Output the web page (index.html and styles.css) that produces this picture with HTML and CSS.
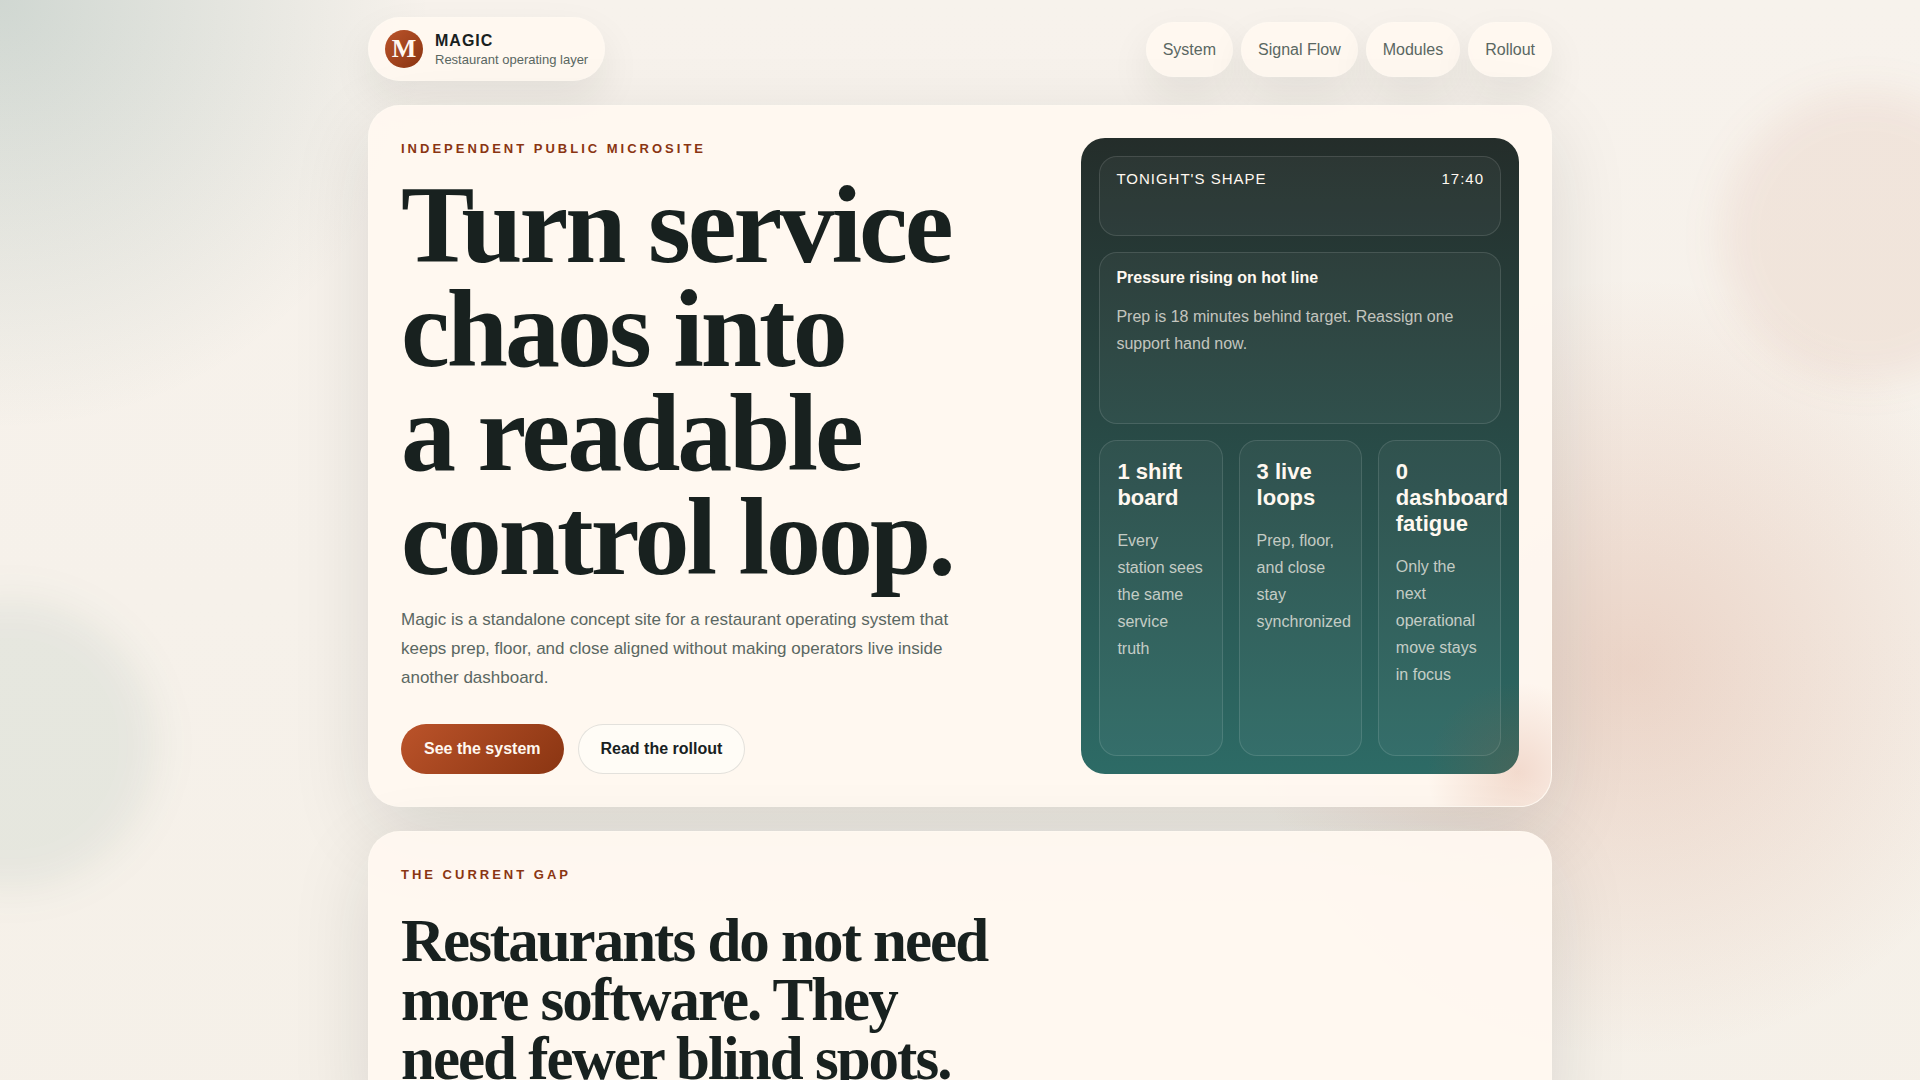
FILE: index.html
```html
<!DOCTYPE html>
<html lang="en">
<head>
    <meta charset="UTF-8">
    <meta name="viewport" content="width=device-width, initial-scale=1.0">
    <title>Magic | Restaurant operating layer</title>
    <link rel="stylesheet" href="styles.css">
</head>
<body>
    <div class="blob blob-warm"></div>
    <div class="blob blob-cool"></div>

    <div class="page">
        <header class="topbar">
            <a class="brand" href="#top">
                <span class="brand-mark">M</span>
                <span class="brand-text">
                    <strong>MAGIC</strong>
                    <small>Restaurant operating layer</small>
                </span>
            </a>
            <nav class="nav">
                <a href="#system">System</a>
                <a href="#flow">Signal Flow</a>
                <a href="#modules">Modules</a>
                <a href="#rollout">Rollout</a>
            </nav>
        </header>

        <main>
            <section class="card hero" id="top">
                <div class="hero-copy">
                    <p class="kicker">Independent public microsite</p>
                    <h1>Turn service<br>chaos into<br>a readable<br>control loop.</h1>
                    <p class="lead">Magic is a standalone concept site for a restaurant operating system that keeps prep, floor, and close aligned without making operators live inside another dashboard.</p>
                    <div class="actions">
                        <a class="button primary" href="#system">See the system</a>
                        <a class="button secondary" href="#rollout">Read the rollout</a>
                    </div>
                </div>

                <div class="panel">
                    <div class="tile tile-head">
                        <span>Tonight's shape</span>
                        <span>17:40</span>
                    </div>
                    <div class="tile">
                        <strong>Pressure rising on hot line</strong>
                        <p>Prep is 18 minutes behind target. Reassign one support hand now.</p>
                    </div>
                    <div class="stats">
                        <div class="tile stat">
                            <strong>1 shift board</strong>
                            <p>Every station sees the same service truth</p>
                        </div>
                        <div class="tile stat">
                            <strong>3 live loops</strong>
                            <p>Prep, floor, and close stay synchronized</p>
                        </div>
                        <div class="tile stat">
                            <strong>0 dashboard fatigue</strong>
                            <p>Only the next operational move stays in focus</p>
                        </div>
                    </div>
                </div>
            </section>

            <section class="card" id="system">
                <p class="kicker">The current gap</p>
                <h2>Restaurants do not need more software. They need fewer blind spots.</h2>
            </section>
        </main>
    </div>
</body>
</html>
```
FILE: styles.css
```css
:root {
    --ink: #18211f;
    --muted: #5a6762;
    --rust: #bb532a;
    --rust-dark: #8a3512;
    --card: rgba(255, 248, 240, 0.94);
    --line: rgba(255, 250, 242, 0.7);
    --shadow: 0 24px 80px rgba(24, 33, 31, 0.12);
}
* {
    box-sizing: border-box;
}
body {
    margin: 0;
    position: relative;
    overflow-x: hidden;
    font-family: "Liberation Sans", Arial, sans-serif;
    font-size: 16px;
    color: var(--ink);
    background:
        radial-gradient(circle at 0 0, rgba(31, 94, 90, 0.18), transparent 430px),
        radial-gradient(circle at 85% 667px, rgba(184, 79, 40, 0.18), transparent 390px),
        linear-gradient(180deg, #f7f2ec, #f5f0e8);
}
h1, h2, p {
    margin: 0;
}
a {
    color: inherit;
    text-decoration: none;
}

/* soft background shapes */
.blob {
    position: absolute;
    width: 288px;
    height: 288px;
    border-radius: 50%;
    filter: blur(20px);
}
.blob-warm {
    top: 92px;
    right: -90px;
    background: rgba(184, 79, 40, 0.08);
}
.blob-cool {
    top: 600px;
    left: -132px;
    background: rgba(31, 94, 90, 0.07);
}

.page {
    position: relative;
    max-width: 1184px;
    margin: 0 auto;
    padding: 17px 0 48px;
}

.topbar {
    display: flex;
    justify-content: space-between;
    align-items: center;
    margin-bottom: 24px;
}
.brand, .nav a {
    background: var(--card);
    border: 1px solid var(--line);
    border-radius: 999px;
    box-shadow: 0 18px 40px rgba(24, 33, 31, 0.08);
}
.brand {
    display: flex;
    align-items: center;
    gap: 12px;
    padding: 12px 16px;
}
.brand-mark {
    display: grid;
    place-items: center;
    width: 38px;
    height: 38px;
    border-radius: 50%;
    background: linear-gradient(135deg, var(--rust), var(--rust-dark));
    color: #fff8f0;
    font: bold 26px "Liberation Serif", serif;
}
.brand-text {
    display: grid;
}
.brand-text strong {
    line-height: 20px;
    letter-spacing: 1px;
}
.brand-text small {
    font-size: 13px;
    line-height: 17px;
    color: var(--muted);
}
.nav {
    display: flex;
    gap: 8px;
}
.nav a {
    padding: 14px 16px;
    line-height: 25px;
    color: var(--muted);
}

.card {
    position: relative;
    padding: 32px;
    margin-bottom: 24px;
    background: var(--card);
    border: 1px solid var(--line);
    border-radius: 32px;
    box-shadow: var(--shadow);
}
.hero {
    display: grid;
    grid-template-columns: minmax(0, 3fr) minmax(0, 2fr);
    gap: 24px;
    overflow: hidden;
}
.hero::after {
    content: "";
    position: absolute;
    right: -56px;
    bottom: -56px;
    width: 180px;
    height: 180px;
    border-radius: 50%;
    background: radial-gradient(circle, rgba(184, 79, 40, 0.17), transparent 90px);
    pointer-events: none;
}
.kicker {
    font-size: 13px;
    line-height: 22px;
    font-weight: bold;
    letter-spacing: 3px;
    text-transform: uppercase;
    color: var(--rust-dark);
}
h1, h2 {
    font-family: "Liberation Serif", "Times New Roman", serif;
    font-weight: bold;
}
h1 {
    margin-top: 13px;
    font-size: 110px;
    line-height: 104px;
    letter-spacing: -3px;
}
h2 {
    max-width: 612px;
    margin-top: 25px;
    font-size: 61px;
    line-height: 59px;
    letter-spacing: -2px;
}
.lead {
    max-width: 560px;
    margin-top: 16px;
    font-size: 17px;
    line-height: 29px;
    color: var(--muted);
}
.actions {
    display: flex;
    gap: 14px;
    margin-top: 32px;
}
.button {
    padding: 14px 22px;
    border: 1px solid transparent;
    border-radius: 999px;
    font-weight: bold;
    line-height: 20px;
}
.primary {
    background: linear-gradient(135deg, var(--rust), var(--rust-dark)) border-box;
    color: #fff8f0;
}
.secondary {
    background: #fffcf6;
    border-color: rgba(24, 33, 31, 0.12);
}

.panel {
    display: grid;
    grid-template-rows: 80fr 172fr 317fr;
    gap: 16px;
    padding: 18px;
    border-radius: 24px;
    background: linear-gradient(180deg, #242d2a, #2d6b66);
    color: #fff8f0;
}
.tile {
    padding: 16px;
    border: 1px solid rgba(255, 255, 255, 0.12);
    border-radius: 18px;
    background: rgba(255, 255, 255, 0.04);
}
.tile strong {
    display: block;
    line-height: 18px;
}
.tile p {
    margin-top: 16px;
    line-height: 27px;
    color: rgba(255, 248, 240, 0.72);
}
.tile-head {
    display: flex;
    justify-content: space-between;
    padding-top: 12px;
    font-size: 15px;
    line-height: 20px;
    letter-spacing: 1px;
    text-transform: uppercase;
}
.stats {
    display: grid;
    grid-template-columns: repeat(3, minmax(0, 1fr));
    gap: 16px;
}
.stat {
    padding: 18px 18px 18px 17px;
}
.stat strong {
    font-size: 22px;
    line-height: 26px;
}
```
